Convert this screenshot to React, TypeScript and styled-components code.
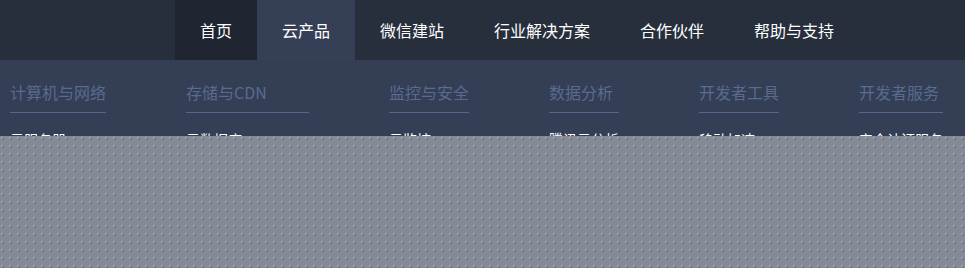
import React from "react";
import styled, { createGlobalStyle } from "styled-components";

const Global = createGlobalStyle`
  html, body { margin: 0; padding: 0; }
  body {
    width: 965px;
    height: 268px;
    overflow: hidden;
    background: #343e55;
    font-family: "Noto Sans CJK SC", "Noto Sans", sans-serif;
  }
`;

const Page = styled.div`
  position: relative;
  width: 965px;
  height: 268px;
  overflow: hidden;
`;

const NavBar = styled.nav`
  display: flex;
  height: 60px;
  padding-left: 175px;
  background: #272f3c;
`;

const NavItem = styled.a<{ $state?: "active" | "open" }>`
  display: block;
  padding: 0 25px;
  line-height: 60px;
  font-size: 16px;
  color: #ffffff;
  text-decoration: none;
  white-space: nowrap;
  background: ${(p) =>
    p.$state === "active" ? "#1f2531" : p.$state === "open" ? "#353f56" : "transparent"};
`;

const Dropdown = styled.div`
  display: flex;
  gap: 80px;
  padding: 20px 0 0 10px;
  height: 208px;
  box-sizing: border-box;
  background: #343e55;
`;

const Column = styled.div<{ $width: number }>`
  display: flex;
  flex-direction: column;
  width: ${(p) => p.$width}px;
  flex: none;
`;

const Heading = styled.div`
  font-size: 16px;
  line-height: 24px;
  color: #596b8f;
  padding-bottom: 8px;
  border-bottom: 1px solid #56698d;
  white-space: nowrap;
`;

const ItemList = styled.ul`
  list-style: none;
  margin: 14px 0 0;
  padding: 0;
  display: flex;
  flex-direction: column;
  gap: 8px;
`;

const Item = styled.li`
  font-size: 14px;
  line-height: 24px;
  color: #ffffff;
  white-space: nowrap;
`;

const Backdrop = styled.div`
  position: absolute;
  left: 0;
  right: 0;
  top: 136px;
  bottom: 0;
  background-color: #858a97;
  background-image: radial-gradient(circle at 2px 2px, #9b9fa9 0.7px, transparent 1px),
    radial-gradient(circle at 3px 3px, #6d7280 0.7px, transparent 1px);
  background-size: 8px 8px, 8px 8px;
`;

const navItems: { label: string; state?: "active" | "open" }[] = [
  { label: "首页", state: "active" },
  { label: "云产品", state: "open" },
  { label: "微信建站" },
  { label: "行业解决方案" },
  { label: "合作伙伴" },
  { label: "帮助与支持" },
];

const columns = [
  { title: "计算机与网络", width: 96, items: ["云服务器", "负载均衡", "私有网络"] },
  { title: "存储与CDN", width: 123, items: ["云数据库", "对象存储", "内容分发网络"] },
  { title: "监控与安全", width: 80, items: ["云监控", "云安全"] },
  { title: "数据分析", width: 70, items: ["腾讯云分析", "数据仓库"] },
  { title: "开发者工具", width: 80, items: ["移动加速", "信鸽推送"] },
  { title: "开发者服务", width: 84, items: ["安全认证服务", "短信服务"] },
];

export default function App() {
  return (
    <Page>
      <Global />
      <NavBar>
        {navItems.map((n) => (
          <NavItem key={n.label} $state={n.state} href="#">
            {n.label}
          </NavItem>
        ))}
      </NavBar>
      <Dropdown>
        {columns.map((c) => (
          <Column key={c.title} $width={c.width}>
            <Heading>{c.title}</Heading>
            <ItemList>
              {c.items.map((i) => (
                <Item key={i}>{i}</Item>
              ))}
            </ItemList>
          </Column>
        ))}
      </Dropdown>
      <Backdrop />
    </Page>
  );
}
